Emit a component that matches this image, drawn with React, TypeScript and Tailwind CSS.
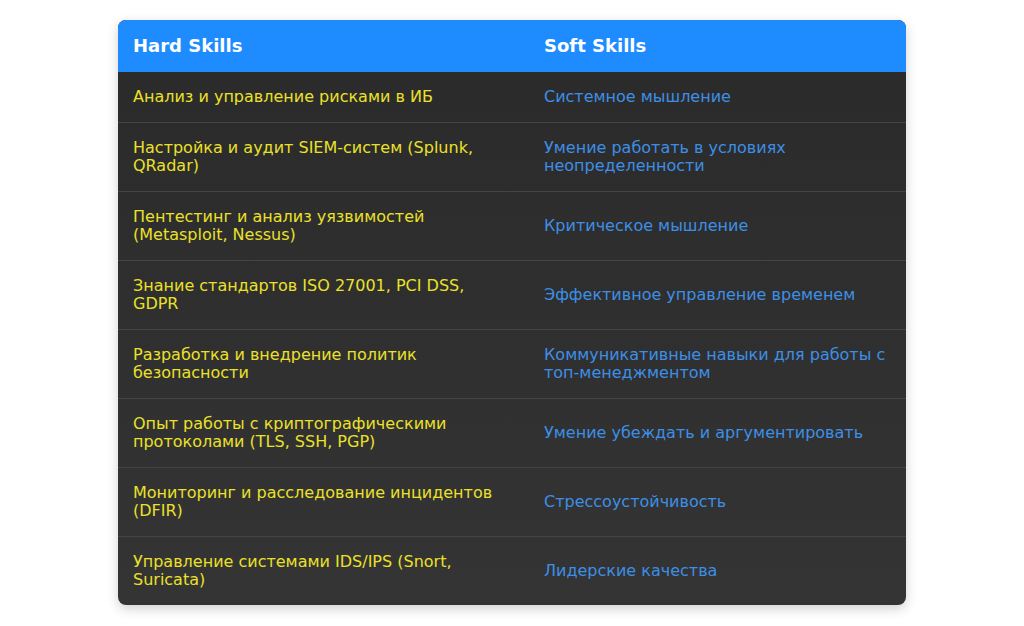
const rows: [string, string][] = [
  ["Анализ и управление рисками в ИБ", "Системное мышление"],
  ["Настройка и аудит SIEM-систем (Splunk, QRadar)", "Умение работать в условиях неопределенности"],
  ["Пентестинг и анализ уязвимостей (Metasploit, Nessus)", "Критическое мышление"],
  ["Знание стандартов ISO 27001, PCI DSS, GDPR", "Эффективное управление временем"],
  ["Разработка и внедрение политик безопасности", "Коммуникативные навыки для работы с топ-менеджментом"],
  ["Опыт работы с криптографическими протоколами (TLS, SSH, PGP)", "Умение убеждать и аргументировать"],
  ["Мониторинг и расследование инцидентов (DFIR)", "Стрессоустойчивость"],
  ["Управление системами IDS/IPS (Snort, Suricata)", "Лидерские качества"],
];

export default function App() {
  return (
    <div className="min-h-[626px] bg-white pt-5 font-['DejaVu_Sans',sans-serif]">
      <div className="mx-auto w-[788px] overflow-hidden rounded-lg bg-gradient-to-b from-[#2a2a2a] to-[#343434] shadow-[0_4px_12px_rgba(0,0,0,0.18)]">
        <div className="grid grid-cols-[411px_1fr] bg-[#1e8cff] text-[18px] font-bold leading-[20px] text-white">
          <div className="px-[15px] py-[16px]">Hard Skills</div>
          <div className="px-[15px] py-[16px]">Soft Skills</div>
        </div>
        {rows.map(([hard, soft], i) => (
          <div
            key={i}
            className={`grid grid-cols-[411px_1fr] items-center text-[16px] leading-[18px] ${
              i < rows.length - 1 ? "border-b border-[#444444]" : ""
            }`}
          >
            <div className="px-[15px] py-[16px] text-[#ebe02a]">{hard}</div>
            <div className="px-[15px] py-[16px] text-[#3d8fe6]">{soft}</div>
          </div>
        ))}
      </div>
    </div>
  );
}
